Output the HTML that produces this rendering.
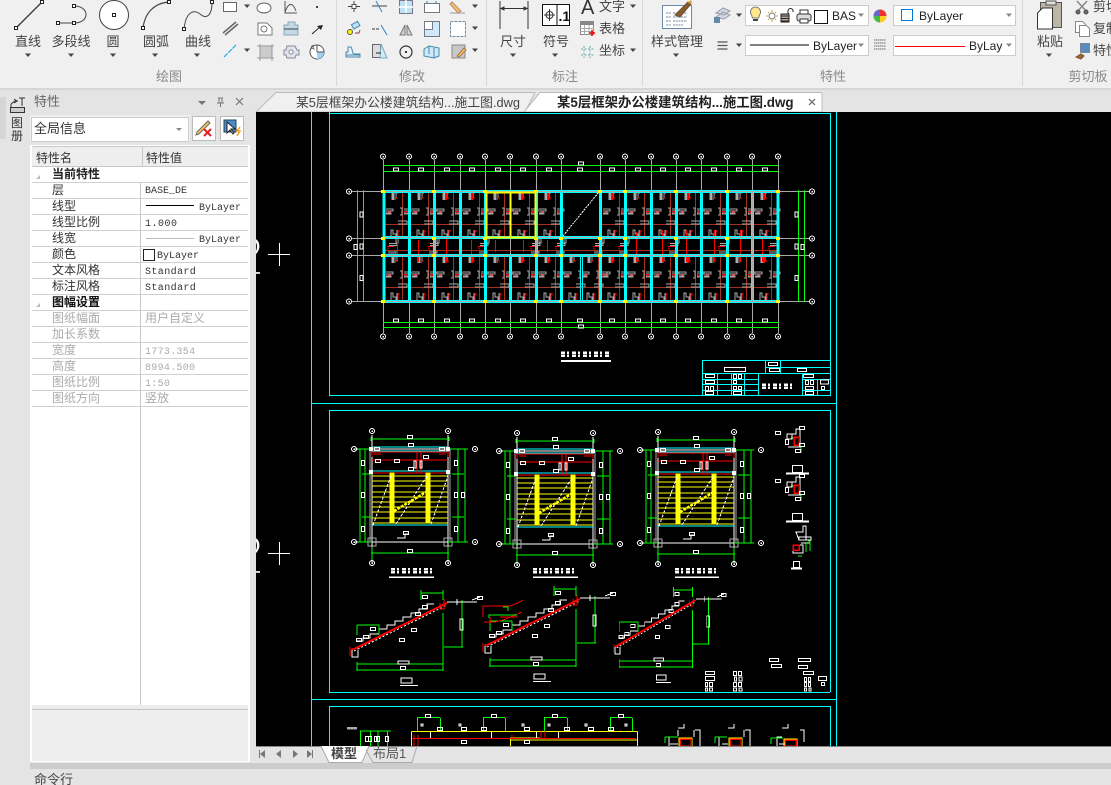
<!DOCTYPE html>
<html lang="zh">
<head>
<meta charset="utf-8">
<title>CAD</title>
<style>
html,body{margin:0;padding:0;width:1111px;height:785px;overflow:hidden;background:#e4e4e4}
svg{display:block}
text{font-family:"Liberation Sans","Noto Sans CJK SC",sans-serif;font-size:13px;fill:#444}
.c{text-anchor:middle}
.lab{fill:#8a8a8a;font-size:13px}
.pn{font-size:12px;fill:#333}
.pv{font-family:"Liberation Mono","Noto Sans CJK SC",monospace;font-size:10px;fill:#333}
.g{fill:#ababab}
.b{font-weight:bold;fill:#222;font-size:12px}
.cad{shape-rendering:crispEdges}
.big{font-size:56px;fill:#fff;stroke:#000;stroke-width:2.600px}
</style>
</head>
<body>
<svg width="1111" height="785" viewBox="0 0 1111 785" xmlns="http://www.w3.org/2000/svg">
<defs>
<path id="ar" d="M-3 -1.5h6l-3 3.5z" fill="#444"/>
<path id="ars" d="M-3 -1.5h6l-3 3.5z" fill="#888"/>
<rect id="sq" x="-1.5" y="-1.5" width="3" height="3" fill="#fff" stroke="#222" stroke-width="1"/>
<g id="bay" fill="none">
<path d="M18.5 1V46M0 32.5H25" stroke="#a5301c"/>
<path d="M8 8V1h2v7M12 6V1h2M2 17h7v2H2M2 21h5v1H2M16 16h2v7h-2M20 17h7v2h-7M20 21h5v1h-5M14 29h9v3h-9M7 46v-8h2v4h3v4M13 38v8" stroke="#aaa"/>
<path d="M8 1h2v7H8z" fill="#aaa"/>
<path d="M11.500 8V1M11 6h3M20 19.500h5M4 20h3M14 38v8M14 39h2M22 20v2" stroke="#f00"/>
</g>
<g id="corr" fill="none">
<path d="M3 6.500h7M4 7.500v2" stroke="#f00"/>
<path d="M5 3.500h8v2H5M12 -2v5h2v-5M4 11h8v2H4" stroke="#aaa"/>
</g>
<g id="tag"><rect x="-2.500" y="-1.500" width="5" height="3" fill="none" stroke="#fff"/></g>
<g id="vtag"><rect x="-1.500" y="-2.500" width="3" height="5" fill="none" stroke="#fff"/></g>
<g id="bub"><circle r="2.500" fill="none" stroke="#fff"/><rect x="-.5" y="-.5" width="1.500" height="1.500" fill="#fff"/></g>
<g id="stair" fill="none">
<path d="M0 -14V114M76 -14V114M-18 0H94M-18 93H94" stroke="#fff"/>
<path d="M-2 0V93M78 0V93" stroke="#aaa"/>
<path d="M-1 -10H77M-1 104H77M0 98V112M76 98V112M-12 0V93M-7 0V93M86 0V93M93 0V93M-14 0H0M-14 93H0M76 0H96M76 93H96M-10 25H-1M-10 68H-1M80 25H92M80 68H92M-1 -12V-8M77 -12V-8" stroke="#0f0"/>
<path d="M0 -2H76M0 2H76M0 22H76M0 76H76" stroke="#0ff"/>
<path d="M0 3H76M0 11H76M0 24H76M45 3V24M49 3V24M0 3V8M76 3V8M2 5h7M67 5h7" stroke="#f00"/>
<path d="M0 27H76M0 32H76M0 37H76M0 43H76M0 48H76M0 53H76M0 58H76M0 63H76M0 69H76M0 74H76" stroke="#ff0"/>
<path d="M18 24h4v50h-4zM54 24h4v50h-4z" fill="#ff0" stroke="#ff0"/>
<path d="M1 76L19 27M24 75L55 27M59 75L76 27" stroke="#fff" stroke-dasharray="3 1.500"/>
<path d="M22 62L56 42" stroke="#ff0" stroke-width="2.500" stroke-dasharray="3 1"/>
<rect x="-4" y="89" width="8" height="8" stroke="#aaa" stroke-width="1.300"/>
<rect x="72" y="89" width="8" height="8" stroke="#aaa" stroke-width="1.300"/>
<path d="M-3 -2h4v4h-4zM74 -2h4v4h-4zM-3 21h4v4h-4zM74 21h4v4h-4z" fill="#fff"/>
<use href="#bub" x="0" y="-18"/><use href="#bub" x="76" y="-18"/>
<use href="#bub" x="0" y="114"/><use href="#bub" x="76" y="114"/>
<use href="#bub" x="-18" y="0"/><use href="#bub" x="-18" y="93"/>
<use href="#bub" x="103" y="0"/><use href="#bub" x="103" y="93"/>
<use href="#tag" x="38" y="-12"/><use href="#tag" x="38" y="102"/><use href="#tag" x="39" y="-4"/><use href="#tag" x="39" y="20"/>
<use href="#tag" x="5" y="0"/><use href="#tag" x="70" y="0"/><use href="#tag" x="54" y="8"/><use href="#tag" x="25" y="12"/><use href="#tag" x="6" y="12"/>
<rect x="42" y="12" width="2" height="7" stroke="#fff"/><rect x="48" y="12" width="2" height="7" stroke="#fff"/>
<use href="#vtag" x="-9" y="46"/><use href="#vtag" x="-9" y="14"/><use href="#vtag" x="-9" y="80"/>
<use href="#vtag" x="84" y="14"/><use href="#vtag" x="84" y="46"/><use href="#vtag" x="84" y="80"/><use href="#vtag" x="91" y="46"/>
<use href="#tag" x="34" y="84"/><path d="M25 89h8v-4h4" stroke="#fff"/>
</g>
<g id="sec" fill="none">
<path d="M0 0L95 -47" stroke="#f00" stroke-width="2"/>
<path d="M2 1L95 -45" stroke="#fff" stroke-dasharray="2 2"/>
<path d="M4 -9h7v-3h7v-4h9v-5h8v-4h8v-4h8v-4h8v-4h8v-4h8v-5h7" stroke="#fff"/>
<path d="M0 -2v9h6v-7M88 -47v6h4v-10M-2 -3v9" stroke="#f00"/>
<path d="M0 0v7h6v-7" stroke="#fff"/>
<path d="M5 14H91M5 20H91M5 12V21M91 12V21M91 -37V20M69 -57H91M69 -60V-50M91 -60V-50M110 -50V-3M92 -3H111M5 -25H27M5 -25V-15M27 -25V-15" stroke="#0f0"/>
<path d="M95 -48h30M105 -51v6M120 -50l8 -3" stroke="#fff"/>
<rect x="46" y="11" width="11" height="3" stroke="#fff"/>
<use href="#tag" x="51" y="18"/><use href="#tag" x="73" y="-53"/><use href="#tag" x="73" y="-43"/><use href="#tag" x="66" y="-36"/>
<use href="#tag" x="14" y="-13"/><use href="#tag" x="7" y="-10"/><use href="#tag" x="50" y="-10"/><use href="#tag" x="62" y="-20"/>
<use href="#tag" x="21" y="-21"/><use href="#tag" x="128" y="-52"/>
<rect x="108" y="-31" width="3" height="11" stroke="#fff"/>
<rect x="49" y="28" width="11" height="5" stroke="#fff"/>
<path d="M48 35.500H66" stroke="#fff"/>
</g>
<g id="sect" fill="none">
<path d="M1 13h10M1 4h4M11 13v6" stroke="#0f0"/>
<rect x="-3" y="0" width="5" height="5" stroke="#fff"/>
<path d="M0 0h6v-5h4v18h-12" stroke="#fff"/>
<rect x="4" y="3" width="5" height="8" stroke="#f00" stroke-width="1.500"/>
<use href="#tag" x="-12" y="-1"/><use href="#tag" x="12" y="-6"/><use href="#tag" x="12" y="11"/><use href="#vtag" x="-3" y="8"/>
<use href="#tag" x="8" y="17"/>
<rect x="2.500" y="31.500" width="10" height="7" stroke="#fff"/>
<path d="M-4 39.500H19" stroke="#fff" stroke-width="2"/>
</g>
</defs>

<!-- base -->
<rect width="1111" height="785" fill="#e4e4e4"/>
<rect width="1111" height="88" fill="#f0f0f0"/>
<rect y="88" width="1111" height="2" fill="#d6d6d6"/>
<path d="M336.500 0V86M486.500 0V86M642.500 0V86M1022.500 0V86" stroke="#d8d8d8"/>
<rect x="0" y="97" width="6" height="42" fill="#d6d6d6"/>

<!-- drawing ribbon icons -->
<g fill="none" stroke="#333">
<path d="M16 28L42 2" stroke="#444" stroke-width="1.500"/>
<use href="#sq" x="16" y="28"/><use href="#sq" x="42" y="2"/>
<path d="M58 23H74M74 6C90 6 90 23 74 23" stroke="#444"/>
<use href="#sq" x="58" y="23"/><use href="#sq" x="74" y="23"/><use href="#sq" x="74" y="6"/>
<circle cx="114" cy="15" r="14.500" fill="#fff" stroke="#444"/><use href="#sq" x="114" y="15"/>
<path d="M143 28C145 12 155 3 169 2" stroke="#444" stroke-width="1.200"/>
<use href="#sq" x="143" y="28"/><use href="#sq" x="169" y="2"/>
<path d="M184 29C186 10 195 10 200 14C207 20 212 15 212 2" stroke="#444"/>
<use href="#sq" x="184" y="29"/><use href="#sq" x="212" y="2"/>
</g>
<g fill="none" stroke="#666">
<rect x="223.500" y="2.500" width="13" height="9" fill="#fff"/>
<ellipse cx="264" cy="8" rx="7" ry="5" fill="#fff"/>
<path d="M285 1V13H297M285 12C289 1 293 3 296 11" stroke="#555"/>
<rect x="316" y="6" width="2" height="2" fill="#444" stroke="none"/>
<path d="M223 33L236 22M225 35L238 24" stroke-width="1.500"/>
<path d="M258 23h9l5 5v7h-14z" fill="#fff" stroke="#777"/><circle cx="264" cy="29" r="3" stroke="#777"/>
<path d="M284 25h4v-3h7v3h3v10h-14z" fill="#c5d8e8" stroke="#8aa"/>
<path d="M284 29H298" stroke="#345"/>
<path d="M312 34L321 26" stroke="#222"/><path d="M323 25l-6 1 4 4z" fill="#222" stroke="none"/>
<path d="M224 57L236 45" stroke="#2aa8e8" stroke-dasharray="5 1" stroke-width="1.200"/>
<rect x="260" y="46" width="12" height="12" fill="#ccc" stroke="#777"/>
<path d="M257 46h17M257 58h17M260 44v17M272 44v17" stroke="#999"/>
<path d="M287 46h8l2 4h2v5h-3l-1 3h-8l-1-3h-2v-5h2z" fill="#dfe3ea" stroke="#889"/><circle cx="291" cy="52" r="2" fill="#fff" stroke="#889"/>
<circle cx="317" cy="52" r="7" fill="#fff" stroke="#555"/>
<path d="M317 52h7a7 7 0 0 1-7 7z" fill="#9cd3f0" stroke="none"/><path d="M317 52V45M317 52h7" stroke="#555"/>
</g>
<text x="310" y="50" style="font-size:7px">A</text>
<use href="#ar" x="247" y="6"/><use href="#ar" x="247" y="50"/>

<!-- modify icons -->
<g fill="none" stroke="#555">
<path d="M354 1V12M348 6.500H360" stroke="#444"/><rect x="352" y="4.500" width="4" height="4" fill="#fff"/>
<path d="M372 6h15" stroke="#444"/><path d="M376 1L382 12" stroke="#2a86c8"/>
<rect x="399.500" y="0.500" width="13" height="13" fill="#bfe0f5" stroke="#778"/><path d="M406 0V13M399 7H413" stroke="#fff" stroke-width="1.500"/>
<path d="M424.500 3.500h15v9h-15z" fill="#fff" stroke="#777"/><path d="M427 1v3M436 1v3" stroke="#2a86c8"/>
<path d="M452 2l9 9-3 2-8-9z" fill="#f5c35a" stroke="#b87"/><path d="M450 13H465" stroke="#999"/>
<circle cx="350" cy="32" r="2.500" fill="#ff0" stroke="#555"/><rect x="352" y="23" width="7" height="5" fill="#bfe0f5" stroke="#48a" transform="rotate(-30 355 25)"/><path d="M355 33h4l1-3" stroke="#a33"/>
<path d="M372 29h7" stroke="#333" stroke-dasharray="3 1"/><path d="M381 25L387 35" stroke="#2a86c8"/>
<path d="M405 25v10h-5zM407 25v10h5z" fill="#cfd6dc" stroke="#777"/>
<rect x="424.500" y="21.500" width="15" height="15" fill="#cfe9fb" stroke="#778"/><rect x="424.500" y="21.500" width="8" height="8" fill="#fff" stroke="#778"/>
<rect x="450.500" y="21.500" width="15" height="15" fill="#fff" stroke="#789" stroke-dasharray="3 1"/>
<path d="M346 57h14v-3h-6c-2 0-1-4-3-7h-3v5h-2z" fill="#e8f2fa" stroke="#48a"/><path d="M346 55h14" stroke="#48a"/>
<rect x="372.500" y="44.500" width="8" height="13" fill="#ddd" stroke="#666"/><path d="M381 44l6 14h-7z" fill="#d3e9f8" stroke="#7ab"/><path d="M376 53h5" stroke="#222"/>
<circle cx="406" cy="52" r="6" stroke="#333" stroke-width="1.200"/><rect x="405" y="51" width="2" height="2" fill="#333" stroke="none"/>
<path d="M424 49l5-3 10 2v8l-5 2-10-2z" fill="#cfe9fb" stroke="#48a"/><path d="M429 46v8M434 48v10" stroke="#48a"/>
<rect x="452" y="45" width="13" height="13" fill="#c8c8c8" stroke="#888"/><path d="M457 56l7-8 2 2-7 7z" fill="#f5c35a" stroke="#a75"/>
</g>
<use href="#ar" x="475" y="6"/><use href="#ar" x="475" y="28"/><use href="#ar" x="475" y="50"/>

<!-- dim -->
<g fill="none" stroke="#333">
<path d="M500 1V29M528 1V29M500 8.500H528"/>
<path d="M501 8.500l3-1.500v3zM527 8.500l-3-1.500v3z" fill="#333"/>
<rect x="542.500" y="4.500" width="27" height="21" fill="#fff" stroke="#111"/><path d="M557 4V26" stroke="#111"/>
<circle cx="549.500" cy="15" r="3.500"/><path d="M544 15h11M549.500 9v12"/>
</g>
<text x="558.500" y="21" style="font-size:14px;font-weight:bold;fill:#111">.1</text>
<text x="581" y="14" style="font-size:20px;fill:#333">A</text>
<g fill="none">
<rect x="580.500" y="22.500" width="13" height="12" fill="#fff" stroke="#888"/><rect x="580" y="21" width="14" height="4" fill="#888"/>
<path d="M584.500 25v10M589 25v10M580 28.500h14M580 31.500h14" stroke="#aaa"/>
<path d="M589 33h6M592 30v6" stroke="#e00" stroke-width="1.500"/>
<path d="M584 46V58M581 55H595M590 46V58M581 49H595" stroke="#6aa" stroke-dasharray="2 1.500"/>
</g>
<use href="#ar" x="633" y="6"/><use href="#ar" x="633" y="50"/>

<!-- style -->
<g fill="none">
<rect x="662.500" y="5.500" width="29" height="23" fill="#fff" stroke="#6a8aa8"/>
<path d="M666 13h5M673 13h14M666 17h5M673 17h14M666 21h5M673 21h14M666 25h5M673 25h10" stroke="#789" stroke-dasharray="2 .7"/>
<path d="M675 15l13-13 3 2-11 13z" fill="#8a5a2a" stroke="#653"/><path d="M688 2l3-2 1 2-2 2z" fill="#e8a040"/>
</g>

<!-- properties ribbon -->
<g fill="none">
<path d="M716 13l7-5 7 3-6 4zM716 17l7-5 7 3-6 4z" fill="#d0dae2" stroke="#99a"/><rect x="714" y="17" width="6" height="6" fill="#68a"/>
<path d="M717.500 42h10M717.500 45.500h10M717.500 49h10" stroke="#555" stroke-width="1.200"/>
<rect x="745.500" y="5.500" width="123" height="20" fill="#fff" stroke="#ccc"/>
<rect x="893.500" y="5.500" width="122" height="20" fill="#fff" stroke="#ccc"/>
<rect x="745.500" y="35.500" width="123" height="20" fill="#fff" stroke="#ccc"/>
<rect x="893.500" y="35.500" width="122" height="20" fill="#fff" stroke="#ccc"/>
<path d="M755.500 7a5 5 0 0 1 4 8l-1 3h-6l-1-3a5 5 0 0 1 4-8z" fill="#ffe98a" stroke="#777"/><path d="M753 20h5" stroke="#444" stroke-width="2"/>
<circle cx="772" cy="16" r="3" stroke="#777"/><path d="M772 10v2M772 20v2M766 16h2M776 16h2M768 12l1 1M775 19l1 1M776 12l-1 1M768 20l1-1" stroke="#c9a24a"/>
<rect x="781" y="14" width="8" height="8" fill="#ba9" stroke="#222"/><path d="M781 16h8M781 18.500h8M781 21h8" stroke="#222"/><path d="M788 14V11a2.500 2.500 0 0 1 5 0v1" stroke="#222"/>
<rect x="797" y="14" width="14" height="7" rx="2" fill="#ddd" stroke="#333"/><rect x="800" y="10" width="8" height="4" fill="#fff" stroke="#333"/><rect x="800" y="19" width="8" height="4" fill="#fff" stroke="#333"/>
<rect x="814.500" y="10.500" width="13" height="13" fill="#fff" stroke="#111"/>
<rect x="901.500" y="9.500" width="11" height="11" fill="#fff" stroke="#0078d7"/>
<path d="M750 45H809" stroke="#000"/><path d="M895 46.500H965" stroke="#f00"/>
<path d="M874 40h12M874 43h12M874 46h12M874 49h12" stroke="#666" stroke-dasharray="1.500 .5"/>
<circle cx="880" cy="16" r="6.500" fill="#ccc"/>
<path d="M880 16V9.500A6.500 6.500 0 0 1 886.500 16z" fill="#e33"/><path d="M880 16h6.500A6.500 6.500 0 0 1 880 22.500z" fill="#fc2"/><path d="M880 16v6.500A6.500 6.500 0 0 1 873.500 16z" fill="#4b4"/><path d="M880 16H873.500A6.500 6.500 0 0 1 880 9.500z" fill="#66c"/>
</g>
<use href="#ar" x="739" y="15"/><use href="#ar" x="739" y="45"/>
<use href="#ars" x="861" y="15"/><use href="#ars" x="861" y="45"/><use href="#ars" x="1009" y="15"/><use href="#ars" x="1009" y="45"/>
<text x="832" y="20" style="font-size:12px;fill:#222">BAS</text>
<text x="919" y="20" style="font-size:12px;fill:#222">ByLayer</text>
<text x="813" y="50" style="font-size:12px;fill:#222">ByLayer</text>
<svg x="969" y="36" width="34" height="19"><text x="0" y="14" style="font-size:12px;fill:#222">ByLayer</text></svg>

<!-- clipboard -->
<g fill="none" stroke="#555">
<rect x="1040.500" y="2.500" width="21" height="25" fill="#bdb5a8" stroke="#555"/><rect x="1046" y="1" width="10" height="4" fill="#ddd"/>
<path d="M1037.500 13l5-5h10v21h-15z" fill="#fff" stroke="#333"/>
<path d="M1077 1l10 11M1087 1l-10 11" stroke="#888" stroke-width="1.500"/><circle cx="1078" cy="12" r="2" fill="#666"/><circle cx="1086" cy="12" r="2" fill="#666"/>
<path d="M1075.500 21.500h7l3 3v8h-10z" fill="#fff" stroke="#888"/><path d="M1079.500 25.500h7l3 3v8h-10z" fill="#fff" stroke="#888"/>
<rect x="1080.500" y="43.500" width="9" height="9" fill="#5a8ac0" stroke="#789"/><path d="M1076 57l5-3 3 2-3 3z" fill="#a5672a" stroke="#753"/>
</g>
<text x="1093" y="11">剪切</text><text x="1093" y="33">复制</text><text x="1093" y="55">特性匹配</text>

<!-- ribbon text -->
<text class="c" x="28" y="46">直线</text><text class="c" x="71" y="46">多段线</text><text class="c" x="113" y="46">圆</text><text class="c" x="156" y="46">圆弧</text><text class="c" x="198" y="46">曲线</text>
<use href="#ar" x="28" y="55"/><use href="#ar" x="71" y="55"/><use href="#ar" x="113" y="55"/><use href="#ar" x="155" y="55"/><use href="#ar" x="197" y="55"/>
<text class="c" x="513" y="46">尺寸</text><text class="c" x="556" y="46">符号</text><text x="599" y="11">文字</text><text x="599" y="33">表格</text><text x="599" y="55">坐标</text>
<use href="#ar" x="513" y="55"/><use href="#ar" x="555" y="55"/>
<text class="c" x="677" y="46">样式管理</text><use href="#ar" x="676" y="55"/>
<text class="c" x="1050" y="46">粘贴</text><use href="#ar" x="1049" y="55"/>
<text class="c lab" x="169" y="81">绘图</text><text class="c lab" x="412" y="81">修改</text><text class="c lab" x="565" y="81">标注</text><text class="c lab" x="833" y="81">特性</text><text class="c lab" x="1088" y="81">剪切板</text>

<!-- left strip -->
<g fill="none" stroke="#333">
<path d="M11 104l4-3h3M11 107v-3M14 99l3 2-3 2" />
<path d="M19 98h6M22 98v8"/>
<rect x="10.500" y="107.500" width="14" height="5" fill="#ccc"/>
</g>
<text x="11" y="127" style="font-size:12px;fill:#333">图</text>
<text x="11" y="140" style="font-size:12px;fill:#333">册</text>

<!-- property panel -->
<text x="34" y="106" style="font-size:13px;fill:#666">特性</text>
<path d="M198 101h8l-4 4z" fill="#777"/>
<path d="M218 98h5M219 98v5h3v-5M217 103h7M220.500 103v4" fill="none" stroke="#777"/>
<path d="M236 98l7 7M243 98l-7 7" stroke="#777" stroke-width="1.200"/>
<rect x="30" y="115" width="160" height="27" fill="#efefef"/>
<rect x="31.500" y="117.500" width="157" height="24" fill="#fff" stroke="#ccc"/>
<text x="34" y="133" style="font-size:13px;fill:#333">全局信息</text>
<path d="M176 128h6l-3 3z" fill="#888"/>
<rect x="192.500" y="116.500" width="23" height="24" fill="#fff" stroke="#bbb"/>
<path d="M197 132l11-11 2 2-11 11-3 1z" fill="#f5c35a" stroke="#666"/>
<path d="M204 129l7 7M211 129l-7 7" stroke="#e02020" stroke-width="2"/>
<rect x="220.500" y="116.500" width="23" height="24" fill="#fff" stroke="#bbb"/>
<rect x="224" y="120" width="12" height="12" fill="#4a8ac8" stroke="#245"/>
<path d="M227 122v11l3-3 3 4 1-1-3-4h4z" fill="#fff" stroke="#222"/>
<path d="M240 127l-3 4h3l-3 5" stroke="#f5a020" fill="none" stroke-width="1.500"/>

<rect x="30" y="145" width="220" height="617" fill="#fff"/>
<rect x="32" y="147" width="216" height="19" fill="#eeeeee"/>
<path d="M142.500 147V166M32 146.500H248M32 166.500H248" stroke="#c8c8c8"/>
<path d="M140.500 182V705" stroke="#c8c8c8"/>
<path d="M32 182.500H248M32 198.500H248M32 214.500H248M32 230.500H248M32 246.500H248M32 262.500H248M32 278.500H248M32 294.500H248M32 310.500H248M32 326.500H248M32 342.500H248M32 358.500H248M32 374.500H248M32 390.500H248M32 406.500H248" stroke="#d0d0d0"/>
<rect x="32" y="705" width="216" height="4" fill="#ececec"/>
<rect x="32" y="709" width="216" height="52" fill="#eeeeee"/>
<path d="M32 709.500H248" stroke="#c4c4c4"/>
<text x="36" y="162" class="pn">特性名</text><text x="146" y="162" class="pn">特性值</text>
<path d="M40 175l-4 4h4z" fill="#bbb"/><path d="M40 303l-4 4h4z" fill="#bbb"/>
<text x="52" y="178" class="b">当前特性</text>
<text x="52" y="194" class="pn">层</text><text x="145" y="193" class="pv">BASE_DE</text>
<text x="52" y="210" class="pn">线型</text><path d="M146 205.500H194" stroke="#000"/><text x="199" y="210" class="pv">ByLayer</text>
<text x="52" y="226" class="pn">线型比例</text><text x="145" y="226" class="pv" style="letter-spacing:.5px">1.000</text>
<text x="52" y="242" class="pn">线宽</text><path d="M146 238.500H194" stroke="#bbb"/><text x="199" y="242" class="pv">ByLayer</text>
<text x="52" y="258" class="pn">颜色</text><rect x="143.500" y="249.500" width="11" height="11" fill="#fff" stroke="#222"/><text x="157" y="258" class="pv">ByLayer</text>
<text x="52" y="274" class="pn">文本风格</text><text x="145" y="274" class="pv" style="letter-spacing:.4px">Standard</text>
<text x="52" y="290" class="pn">标注风格</text><text x="145" y="290" class="pv" style="letter-spacing:.4px">Standard</text>
<text x="52" y="306" class="b" style="fill:#111">图幅设置</text>
<text x="52" y="322" class="pn g">图纸幅面</text><text x="145" y="322" class="pn g">用户自定义</text>
<text x="52" y="338" class="pn g">加长系数</text>
<text x="52" y="354" class="pn g">宽度</text><text x="145" y="354" class="pv g" style="letter-spacing:.3px">1773.354</text>
<text x="52" y="370" class="pn g">高度</text><text x="145" y="370" class="pv g" style="letter-spacing:.3px">8994.500</text>
<text x="52" y="386" class="pn g">图纸比例</text><text x="145" y="386" class="pv g" style="letter-spacing:.3px">1:50</text>
<text x="52" y="402" class="pn g">图纸方向</text><text x="145" y="402" class="pn g">竖放</text>

<!-- doc tabs -->
<path d="M256 112L276 92.500H535L525 112z" fill="#f0f0f0" stroke="#bbb"/>
<path d="M524 112L540 92.500H820a2 2 0 0 1 2 2V112z" fill="#fff" stroke="#bbb"/>
<text x="296" y="107" style="font-size:12.800px;fill:#444">某5层框架办公楼建筑结构...施工图.dwg</text>
<text x="557" y="107" style="font-size:13.400px;font-weight:bold;fill:#222">某5层框架办公楼建筑结构...施工图.dwg</text>
<path d="M809 99l6 6M815 99l-6 6" stroke="#777" stroke-width="1.400"/>

<!-- CAD canvas -->
<svg x="256" y="112" width="855" height="634" viewBox="256 112 855 634">
<rect x="256" y="112" width="855" height="634" fill="#000"/>
<g class="cad">
<text x="233" y="275" class="big">2</text>
<text x="233" y="574" class="big">2</text>
<path d="M268 254.500H290M279.500 243V266M268 553.500H290M279.500 542V565" stroke="#fff" fill="none"/>
<path d="M311.500 112V746M329.500 112V396M329.500 410V692M329.500 706V746M830.500 113V396M830.500 410V692M830.500 706V746M836.500 112V746M329 113.500H830M329 395.500H830M311 403.500H836M329 410.500H830M329 692.500H830M311 699.500H836M329 706.500H830" stroke="#0ff" fill="none"/>

<!-- plan 1 axes -->
<path d="M383.500 160V333M409.500 160V333M434.500 160V333M460.500 160V333M485.500 160V333M510.500 160V333M536.500 160V333M561.500 160V333M600.500 160V333M625.500 160V333M651.500 160V333M676.500 160V333M701.500 160V333M727.500 160V333M752.500 160V333M778.500 160V333M352 191.500H809M352 238.500H809M352 255.500H809M352 301.500H809" stroke="#aaa" fill="none"/>
<path d="M383 165.500H779M383 171.500H779M383 322.500H779M383 327.500H779M357.500 190V302M363.500 190V302M798.500 190V302M804.500 190V302" stroke="#0f0" fill="none"/>
<g>
<use href="#bay" x="384" y="192"/><use href="#bay" x="410" y="192"/><use href="#bay" x="435" y="192"/><use href="#bay" x="461" y="192"/><use href="#bay" x="486" y="192"/><use href="#bay" x="511" y="192"/><use href="#bay" x="537" y="192"/><use href="#bay" x="601" y="192"/><use href="#bay" x="626" y="192"/><use href="#bay" x="652" y="192"/><use href="#bay" x="677" y="192"/><use href="#bay" x="702" y="192"/><use href="#bay" x="728" y="192"/><use href="#bay" x="753" y="192"/>
<use href="#bay" x="384" y="255"/><use href="#bay" x="410" y="255"/><use href="#bay" x="435" y="255"/><use href="#bay" x="461" y="255"/><use href="#bay" x="486" y="255"/><use href="#bay" x="511" y="255"/><use href="#bay" x="537" y="255"/><use href="#bay" x="562" y="255"/><use href="#bay" x="580" y="255"/><use href="#bay" x="601" y="255"/><use href="#bay" x="626" y="255"/><use href="#bay" x="652" y="255"/><use href="#bay" x="677" y="255"/><use href="#bay" x="702" y="255"/><use href="#bay" x="728" y="255"/><use href="#bay" x="753" y="255"/>
<use href="#corr" x="384" y="240"/><use href="#corr" x="425" y="240"/><use href="#corr" x="475" y="240"/><use href="#corr" x="527" y="240"/><use href="#corr" x="552" y="240"/><use href="#corr" x="590" y="240"/><use href="#corr" x="615" y="240"/><use href="#corr" x="665" y="240"/><use href="#corr" x="715" y="240"/><use href="#corr" x="765" y="240"/>
</g>
<path d="M384 250.500H778" stroke="#a5301c"/>
<path d="M397.500 236V262M418.500 240V262M446.500 236V262M471.500 240V262M495.500 240V252M523.500 240V252M547.500 240V252M562.500 240V254M636.500 232V262M662.500 230V262M686.500 230V262M714.500 230V262M740.500 230V262M762.500 238V262" stroke="#f00" fill="none"/>
<path d="M563 236L598 193" stroke="#fff" stroke-dasharray="2 1" fill="none"/>
<!-- cyan frame -->
<path d="M383 191.500H779M383 237.500H779M383 255.500H779M383 301.500H779" stroke="#0ff" stroke-width="3" fill="none"/>
<path d="M384 192V301M409.500 192V301M434.500 192V301M460.500 192V301M485.500 192V301M510.500 255V301M536.500 192V301M561.500 192V301M600.500 192V301M625.500 192V301M651.500 192V301M676.500 192V301M701.500 192V301M727.500 192V301M752.500 192V301M778 192V301" stroke="#0ff" stroke-width="3" fill="none"/>
<path d="M383 191.500H779M383 237.500H779M383 255.500H779M383 301.500H779M651.500 192V301M701.500 192V301M752.500 192V301M434.500 238V255M536.500 238V255" stroke="#aaa" stroke-width="1" fill="none"/>
<path d="M486 192.500H536M486 237.500H536M486.500 192V238M510.500 192V238M535.500 192V238" stroke="#ff0" stroke-width="2" fill="none"/>
<path d="M580.500 255V301M582.500 255V301" stroke="#0ff" fill="none"/>
<!-- yellow nodes -->
<g fill="#ff0">
<rect x="381" y="190" width="4" height="3"/><rect x="432" y="190" width="4" height="3"/><rect x="483" y="190" width="4" height="3"/><rect x="534" y="190" width="4" height="3"/><rect x="598" y="190" width="4" height="3"/><rect x="623" y="190" width="4" height="3"/><rect x="674" y="190" width="4" height="3"/><rect x="725" y="190" width="4" height="3"/><rect x="776" y="190" width="4" height="3"/>
<rect x="381" y="237" width="4" height="3"/><rect x="432" y="237" width="4" height="3"/><rect x="483" y="237" width="4" height="3"/><rect x="534" y="237" width="4" height="3"/><rect x="559" y="237" width="4" height="3"/><rect x="598" y="237" width="4" height="3"/><rect x="623" y="237" width="4" height="3"/><rect x="674" y="237" width="4" height="3"/><rect x="725" y="237" width="4" height="3"/><rect x="776" y="237" width="4" height="3"/>
<rect x="381" y="254" width="4" height="3"/><rect x="432" y="254" width="4" height="3"/><rect x="483" y="254" width="4" height="3"/><rect x="534" y="254" width="4" height="3"/><rect x="559" y="254" width="4" height="3"/><rect x="598" y="254" width="4" height="3"/><rect x="623" y="254" width="4" height="3"/><rect x="674" y="254" width="4" height="3"/><rect x="725" y="254" width="4" height="3"/><rect x="776" y="254" width="4" height="3"/>
<rect x="381" y="300" width="4" height="3"/><rect x="432" y="300" width="4" height="3"/><rect x="483" y="300" width="4" height="3"/><rect x="534" y="300" width="4" height="3"/><rect x="559" y="300" width="4" height="3"/><rect x="598" y="300" width="4" height="3"/><rect x="623" y="300" width="4" height="3"/><rect x="674" y="300" width="4" height="3"/><rect x="725" y="300" width="4" height="3"/><rect x="776" y="300" width="4" height="3"/>
</g>
<!-- bubbles top/bottom -->
<use href="#bub" x="383" y="156.500"/><use href="#bub" x="409" y="156.500"/><use href="#bub" x="434" y="156.500"/><use href="#bub" x="460" y="156.500"/><use href="#bub" x="485" y="156.500"/><use href="#bub" x="510" y="156.500"/><use href="#bub" x="536" y="156.500"/><use href="#bub" x="561" y="156.500"/><use href="#bub" x="600" y="156.500"/><use href="#bub" x="625" y="156.500"/><use href="#bub" x="651" y="156.500"/><use href="#bub" x="676" y="156.500"/><use href="#bub" x="701" y="156.500"/><use href="#bub" x="727" y="156.500"/><use href="#bub" x="752" y="156.500"/><use href="#bub" x="778" y="156.500"/>
<use href="#bub" x="383" y="336.500"/><use href="#bub" x="409" y="336.500"/><use href="#bub" x="434" y="336.500"/><use href="#bub" x="460" y="336.500"/><use href="#bub" x="485" y="336.500"/><use href="#bub" x="510" y="336.500"/><use href="#bub" x="536" y="336.500"/><use href="#bub" x="561" y="336.500"/><use href="#bub" x="600" y="336.500"/><use href="#bub" x="625" y="336.500"/><use href="#bub" x="651" y="336.500"/><use href="#bub" x="676" y="336.500"/><use href="#bub" x="701" y="336.500"/><use href="#bub" x="727" y="336.500"/><use href="#bub" x="752" y="336.500"/><use href="#bub" x="778" y="336.500"/>
<use href="#bub" x="349" y="191.500"/><use href="#bub" x="349" y="238.500"/><use href="#bub" x="349" y="255.500"/><use href="#bub" x="349" y="301.500"/>
<use href="#bub" x="812" y="191.500"/><use href="#bub" x="812" y="238.500"/><use href="#bub" x="812" y="255.500"/><use href="#bub" x="812" y="301.500"/>
<!-- tags -->
<use href="#tag" x="396" y="169.500"/><use href="#tag" x="421" y="169.500"/><use href="#tag" x="447" y="169.500"/><use href="#tag" x="472" y="169.500"/><use href="#tag" x="498" y="169.500"/><use href="#tag" x="523" y="169.500"/><use href="#tag" x="549" y="169.500"/><use href="#tag" x="580" y="169.500"/><use href="#tag" x="612" y="169.500"/><use href="#tag" x="638" y="169.500"/><use href="#tag" x="663" y="169.500"/><use href="#tag" x="688" y="169.500"/><use href="#tag" x="714" y="169.500"/><use href="#tag" x="739" y="169.500"/><use href="#tag" x="765" y="169.500"/><use href="#tag" x="581" y="163.500"/>
<use href="#tag" x="396" y="320.500"/><use href="#tag" x="421" y="320.500"/><use href="#tag" x="447" y="320.500"/><use href="#tag" x="472" y="320.500"/><use href="#tag" x="498" y="320.500"/><use href="#tag" x="523" y="320.500"/><use href="#tag" x="549" y="320.500"/><use href="#tag" x="580" y="320.500"/><use href="#tag" x="612" y="320.500"/><use href="#tag" x="638" y="320.500"/><use href="#tag" x="663" y="320.500"/><use href="#tag" x="688" y="320.500"/><use href="#tag" x="714" y="320.500"/><use href="#tag" x="739" y="320.500"/><use href="#tag" x="765" y="320.500"/><use href="#tag" x="581" y="326.500"/>
<use href="#vtag" x="361.500" y="214.500"/><use href="#vtag" x="361.500" y="246.500"/><use href="#vtag" x="355.500" y="247"/><use href="#vtag" x="361.500" y="278"/>
<use href="#vtag" x="796.500" y="214.500"/><use href="#vtag" x="796.500" y="246.500"/><use href="#vtag" x="802.500" y="247"/><use href="#vtag" x="796.500" y="278"/>
<!-- plan title -->
<path d="M561 352.500H610M561 355.500H610" stroke="#fff" stroke-width="2.500" stroke-dasharray="4 2 2 3" fill="none"/>
<path d="M561 361H611" stroke="#fff" stroke-width="2" fill="none"/>
<!-- title block -->
<path d="M702.500 360V395M702 360.500H830M765.500 360V373M780.500 360V373M765 367.500H830M702 373.500H830M702 379.500H758M702 384.500H758M702 390.500H758M717.500 373V395M731.500 373V395M744.500 373V395M758.500 373V395M802 379.500H830M802 390.500H830M802.500 373V395M817.500 379V395" stroke="#0ff" fill="none"/>
<g fill="none" stroke="#fff">
<rect x="724.500" y="367.500" width="21" height="4"/><rect x="768.500" y="362.500" width="9" height="3"/><rect x="769.500" y="368.500" width="10" height="3"/><rect x="797.500" y="368.500" width="9" height="3"/>
<rect x="705.500" y="374.500" width="9" height="3"/><rect x="705.500" y="380.500" width="9" height="3"/><rect x="705.500" y="386.500" width="3" height="4"/><rect x="710.500" y="386.500" width="3" height="4"/><rect x="733.500" y="374.500" width="3" height="4"/><rect x="738.500" y="374.500" width="3" height="4"/><rect x="733.500" y="380.500" width="3" height="3"/><rect x="733.500" y="386.500" width="3" height="3"/><rect x="738.500" y="386.500" width="3" height="3"/><rect x="705.500" y="391.500" width="8" height="3"/><rect x="733.500" y="391.500" width="8" height="3"/>
<rect x="803.500" y="374.500" width="10" height="3"/><rect x="805.500" y="380.500" width="3" height="4"/><rect x="810.500" y="380.500" width="3" height="4"/><rect x="820.500" y="380" width="8" height="4"/><rect x="821.500" y="386.500" width="3" height="3"/><rect x="805.500" y="386.500" width="8" height="3"/><rect x="805.500" y="391.500" width="8" height="3"/>
</g>
<path d="M762 384.500H792M762 387.500H792" stroke="#fff" stroke-width="2.500" stroke-dasharray="4 2 2 3" fill="none"/>

<!-- stair plans -->
<use href="#stair" transform="translate(372 449)"/>
<use href="#stair" transform="translate(517 451)"/>
<use href="#stair" transform="translate(658 450)"/>
<path d="M391 569H434M533 569H576M675 569H718M391 572H434M533 572H576M675 572H718" stroke="#fff" stroke-width="2.500" stroke-dasharray="4 2 2 3" fill="none"/>
<path d="M389 577H434M533 577H578M675 577H719" stroke="#fff" stroke-width="1.500" fill="none"/>
<!-- right details -->
<use href="#sect" transform="translate(790 434)"/>
<use href="#sect" transform="translate(790 482)"/>
<g fill="none">
<path d="M796 532h7v-6h3v14h-7zM801 543h9" stroke="#fff"/>
<rect x="793" y="545" width="10" height="8" stroke="#fff"/>
<rect x="793" y="545" width="6" height="5" stroke="#f00" stroke-width="1.500"/>
<path d="M806 542V552M808 541h2v10M798 556h4" stroke="#0f0"/>
<rect x="799" y="537" width="12" height="3" stroke="#fff"/><rect x="793.500" y="561.500" width="6" height="6" stroke="#fff"/><path d="M791 568.500H802" stroke="#fff" stroke-width="2"/>
</g>
<!-- stair sections -->
<use href="#sec" transform="translate(352 650)"/>
<use href="#sec" transform="translate(485 646)"/>
<use href="#sec" transform="translate(615 647) scale(.85 1)"/>
<path d="M484 606h-1v11M484 606H510l8-3 5-3M484 622h11l8-2 10-4 9-4M500 617h18M490 617v6" stroke="#f00" fill="none"/>
<path d="M489 618v-3H517M503 607h5v4" stroke="#0f0" fill="none"/>
<g fill="none" stroke="#fff">
<rect x="769.500" y="658.500" width="9" height="3"/><rect x="771.500" y="664.500" width="10" height="3"/><rect x="798.500" y="658.500" width="12" height="3"/><rect x="798.500" y="665.500" width="9" height="3"/><rect x="803.500" y="671.500" width="10" height="3"/><rect x="818.500" y="676.500" width="8" height="4"/><rect x="821.500" y="682.500" width="3" height="3"/>
<rect x="705.500" y="671.500" width="9" height="3"/><rect x="705.500" y="676.500" width="9" height="4"/><rect x="705.500" y="682.500" width="2" height="4"/><rect x="709.500" y="682.500" width="3" height="4"/><rect x="705.500" y="688" width="2" height="3"/><rect x="709.500" y="688" width="3" height="3"/>
<rect x="733.500" y="671.500" width="3" height="4"/><rect x="738.500" y="671.500" width="3" height="4"/><rect x="734.500" y="677" width="2" height="4"/><rect x="739" y="677" width="3" height="4"/><rect x="733.500" y="682.500" width="3" height="4"/><rect x="738.500" y="682.500" width="3" height="4"/><rect x="733.500" y="688" width="3" height="3"/><rect x="739" y="688" width="3" height="3"/>
<rect x="804.500" y="677.500" width="2" height="4"/><rect x="808.500" y="677.500" width="2" height="4"/><rect x="804.500" y="682.500" width="2" height="4"/><rect x="808.500" y="682.500" width="2" height="4"/><rect x="804.500" y="688" width="2" height="3"/><rect x="809" y="688" width="2" height="3"/>
</g>
<!-- bottom partial -->
<g fill="none">
<path d="M347 728h10" stroke="#aaa" stroke-width="2.500"/><path d="M360 731H391M360.500 731V746M370.500 731V746M378 731V746M387.500 731V746" stroke="#0f0"/>
<use href="#vtag" x="370" y="739"/><use href="#vtag" x="378" y="739"/><use href="#vtag" x="387" y="739"/><use href="#vtag" x="367" y="739"/><use href="#vtag" x="376" y="739"/>
<path d="M417 717.500H440M483 717.500H505M544 717.500H567M610 717.500H632M417.500 718V731M440.500 718V731M483.500 718V731M505.500 718V731M544.500 718V731M567.500 718V731M610.500 718V731M632.500 718V731" stroke="#0f0"/>
<path d="M411.500 731.500H637.500M411.500 731.500V746M637.500 731.500V746M510 738H540M510.500 738V746M637 740H510" stroke="#ff0" stroke-width="1.200"/>
<path d="M412 738.500H636M414 735V746M418 735V746M512 735V738M541 731V738M545 731V738" stroke="#f00" stroke-width="1.300"/>
<path d="M430.500 732V738M491.500 732V738M536.500 732V738M558.500 732V738" stroke="#fff"/>
<use href="#tag" x="428" y="716"/><use href="#tag" x="494" y="716"/><use href="#tag" x="555" y="716"/><use href="#tag" x="621" y="716"/>
<use href="#tag" x="440" y="729"/><use href="#tag" x="464" y="729"/><use href="#tag" x="484" y="729"/><use href="#tag" x="527" y="729"/><use href="#tag" x="567" y="729"/><use href="#tag" x="591" y="729"/><use href="#tag" x="611" y="729"/>
<use href="#tag" x="464" y="742"/><use href="#tag" x="527" y="742"/>
<rect x="421" y="724" width="2" height="2" stroke="#fff"/><rect x="459" y="724" width="2" height="2" stroke="#fff"/><rect x="522" y="724" width="2" height="2" stroke="#fff"/><rect x="548" y="724" width="2" height="2" stroke="#fff"/><rect x="585" y="724" width="2" height="2" stroke="#fff"/><rect x="625" y="724" width="2" height="2" stroke="#fff"/>
<rect x="679" y="738" width="13" height="8" stroke="#ff0"/><rect x="680" y="739" width="11" height="7" stroke="#f00" stroke-width="1.500"/>
<rect x="729" y="738" width="13" height="8" stroke="#ff0"/><rect x="730" y="739" width="11" height="7" stroke="#f00" stroke-width="1.500"/>
<rect x="784" y="739" width="13" height="7" stroke="#ff0"/><rect x="785" y="740" width="11" height="6" stroke="#f00" stroke-width="1.500"/>
<path d="M677 737h-8V746M695 730h5v16M694 730V737M678 728h6v-4M670 744h8M678 730v6" stroke="#fff"/>
<path d="M727 737h-8V746M745 730h5v16M744 730V737M728 728h6v-4M722 744h6" stroke="#fff"/>
<path d="M782 737h-5V746M800 730h4v12M782 728h6v-4M779 744h6" stroke="#fff"/>
<path d="M665 737h13M665 737v6M715 737h12M715 737v6M771 738h12M771 738v6" stroke="#0f0"/>
</g>
</g>
</svg>

<!-- layout tabs -->
<rect x="256" y="746" width="855" height="17" fill="#e4e4e4"/>
<path d="M256 746.500H1111" stroke="#888"/>
<g fill="#777">
<path d="M259 750v8h1v-8zM265 750l-5 4 5 4z"/><path d="M281 750l-5 4 5 4z"/><path d="M293 750l5 4-5 4z"/><path d="M307 750l5 4-5 4zM312 750v8h1v-8z"/>
</g>
<path d="M321 746L329 762H362L369 746z" fill="#fff"/>
<path d="M321 746L329 762.500H362L369 746M366 750L373 762.500H412L417 746" fill="none" stroke="#aaa"/>
<text x="331" y="758" style="font-size:13px;font-weight:bold;fill:#444">模型</text>
<text x="373" y="758" style="font-size:13px;fill:#555">布局1</text>

<!-- bottom bars -->
<rect x="30" y="763" width="1081" height="6" fill="#cccccc"/>
<rect x="0" y="769" width="1111" height="16" fill="#e4e4e4"/>
<text x="34" y="784" style="font-size:13px;fill:#444">命令行</text>
</svg>
</body>
</html>
